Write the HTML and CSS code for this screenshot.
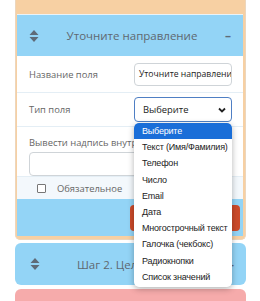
FILE: index.html
```html
<!DOCTYPE html>
<html lang="ru">
<head>
    <meta charset="UTF-8">
    <title>Поля формы</title>
    <link rel="stylesheet" href="styles.css">
</head>
<body>
    <div class="steps">
        <div class="step step-peach">
            <div class="panel">
                <div class="panel-head">
                    <span class="sort-icon">
                        <svg width="10" height="12" viewBox="0 0 10 12"><path d="M5 0 L9.5 5 H0.5 Z M0.5 7 H9.5 L5 12 Z" fill="#5f6b78"/></svg>
                    </span>
                    <span class="panel-title">Уточните направление</span>
                    <span class="collapse">–</span>
                </div>
                <div class="panel-body">
                    <div class="row">
                        <label class="row-label">Название поля</label>
                        <div class="input">Уточните направлени</div>
                    </div>
                    <div class="row row-select">
                        <label class="row-label">Тип поля</label>
                        <div class="select">
                            <span>Выберите</span>
                            <svg width="8" height="6" viewBox="0 0 8 6"><path d="M1 1.5 L4 4.5 L7 1.5" stroke="#222" stroke-width="1.8" fill="none"/></svg>
                        </div>
                    </div>
                    <div class="row row-stack">
                        <label class="row-label">Вывести надпись внутри поля</label>
                        <div class="input input-wide"></div>
                    </div>
                    <div class="row row-check">
                        <span class="checkbox"></span>
                        <span class="check-label">Обязательное</span>
                    </div>
                </div>
                <div class="panel-foot">
                    <button class="btn-delete">Удалить</button>
                </div>
            </div>
        </div>

        <div class="step step-blue">
            <span class="sort-icon">
                <svg width="10" height="12" viewBox="0 0 10 12"><path d="M5 0 L9.5 5 H0.5 Z M0.5 7 H9.5 L5 12 Z" fill="#5f6b78"/></svg>
            </span>
            <span class="step-title">Шаг 2. Цель обращения</span>
            <span class="collapse">–</span>
        </div>

        <div class="step step-pink"></div>
    </div>

    <ul class="dropdown">
        <li class="active">Выберите</li>
        <li>Текст (Имя/Фамилия)</li>
        <li>Телефон</li>
        <li>Число</li>
        <li>Email</li>
        <li>Дата</li>
        <li>Многострочный текст</li>
        <li>Галочка (чекбокс)</li>
        <li>Радиокнопки</li>
        <li>Список значений</li>
    </ul>
</body>
</html>
```

FILE: styles.css
```css
* {
    box-sizing: border-box;
    margin: 0;
    padding: 0;
}

body {
    font-family: "Open Sans", "DejaVu Sans", sans-serif;
    background-color: #fff;
    width: 260px;
    height: 301px;
    overflow: hidden;
    position: relative;
}

.steps {
    padding: 0 14px 0 15px;
    display: flex;
    flex-direction: column;
    gap: 3px;
}

.step-peach {
    background-color: #f7d0a3;
    border: 1px solid #ecd6bd;
    border-top: none;
    padding: 14px 2px 3px 1px;
    border-radius: 0 0 5px 5px;
}

.panel {
    background-color: #93d4f6;
    border-top: 1px solid #e9f3f8;
}

.panel-head {
    height: 41px;
    display: flex;
    align-items: center;
    padding: 0 12px;
    color: #5f6870;
}

.sort-icon {
    display: flex;
    width: 10px;
}

.panel-title {
    flex: 1;
    text-align: center;
    font-size: 11.5px;
}

.collapse {
    font-weight: bold;
    font-size: 12px;
    color: #5f6b78;
}

.panel-body {
    background-color: #fff;
}

.row {
    display: flex;
    align-items: center;
    justify-content: space-between;
    padding: 0 11px 0 12px;
    height: 37px;
    border-bottom: 1px solid #e4eef5;
}

.row-select {
    height: 33px;
    border-bottom: none;
}

.row-label {
    font-size: 9.4px;
    color: #666;
    white-space: nowrap;
}

.input {
    width: 98px;
    height: 23px;
    border: 1px solid #cfd4d8;
    border-radius: 4px;
    font-size: 8.6px;
    color: #222;
    padding: 0 4px;
    display: flex;
    align-items: center;
    white-space: nowrap;
    overflow: hidden;
}

.select {
    width: 98px;
    height: 25px;
    border: 1px solid #4f7fc4;
    border-radius: 4px;
    font-size: 9.4px;
    color: #222;
    padding: 0 5px 0 8px;
    display: flex;
    align-items: center;
    justify-content: space-between;
}

.row-stack {
    flex-direction: column;
    align-items: flex-start;
    justify-content: flex-start;
    gap: 3px;
    height: 51px;
    padding-top: 9px;
    border-top: 1px solid #e4eef5;
}

.input-wide {
    width: 200px;
    height: 24px;
}

.row-check {
    justify-content: flex-start;
    height: 22px;
    padding-left: 20px;
    gap: 11px;
    background-color: #f3f8fc;
    border-bottom: none;
}

.checkbox {
    width: 9px;
    height: 9px;
    border: 1px solid #777;
    border-radius: 1px;
    background-color: #fff;
}

.check-label {
    font-size: 9.4px;
    color: #666;
}

.panel-foot {
    height: 37px;
    display: flex;
    justify-content: flex-end;
    align-items: center;
    padding-right: 3px;
}

.btn-delete {
    width: 110px;
    height: 26px;
    border: none;
    border-radius: 4px;
    background-color: #cc4a2a;
    color: #fff;
    font-family: inherit;
    font-size: 10px;
}

.step-blue {
    background-color: #93d4f6;
    border-radius: 6px;
    height: 42px;
    display: flex;
    align-items: center;
    padding: 0 12px 0 15px;
    color: #5f6870;
}

.step-title {
    flex: 1;
    font-size: 11.5px;
    padding-left: 37px;
    white-space: nowrap;
    overflow: hidden;
}

.step-pink {
    background-color: #f6abab;
    border-radius: 6px 6px 0 0;
    height: 20px;
    margin-top: 1px;
}

.dropdown {
    position: absolute;
    left: 134px;
    top: 123px;
    width: 98px;
    list-style: none;
    background-color: #fff;
    border-radius: 5px;
    box-shadow: 0 2px 6px rgba(0, 0, 0, 0.3);
    font-family: "Liberation Sans", Arial, sans-serif;
    font-size: 9px;
    letter-spacing: -0.2px;
    color: #222;
    padding-bottom: 2px;
    overflow: hidden;
}

.dropdown li {
    height: 16.2px;
    line-height: 16.2px;
    padding-left: 8px;
    white-space: nowrap;
}

.dropdown li.active {
    background-color: #1a6ed8;
    color: #fff;
    border-radius: 4px 4px 0 0;
}
```
